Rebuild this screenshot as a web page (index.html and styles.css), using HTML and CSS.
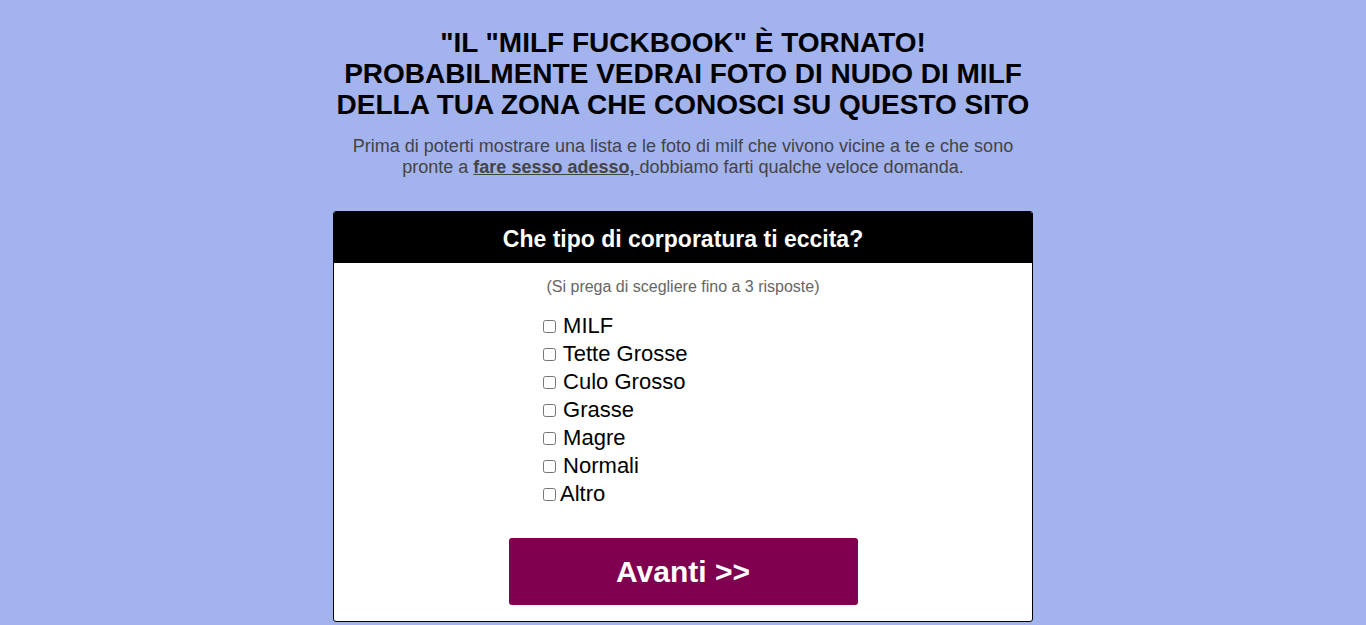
FILE: index.html
```html
<!DOCTYPE html>
<html lang="it">
<head>
<meta charset="utf-8">
<title>Milf Fuckbook</title>
<link rel="stylesheet" href="styles.css">
</head>
<body>
<div class="wrap">
  <h1 class="title">"IL "MILF FUCKBOOK" È TORNATO!<br>PROBABILMENTE VEDRAI FOTO DI NUDO DI MILF DELLA TUA ZONA CHE CONOSCI SU QUESTO SITO</h1>
  <p class="intro">Prima di poterti mostrare una lista e le foto di milf che vivono vicine a te e che sono pronte a <b class="hot">fare sesso adesso, </b>dobbiamo farti qualche veloce domanda.</p>
  <div class="card">
    <div class="card-head">Che tipo di corporatura ti eccita?</div>
    <div class="card-body">
      <p class="hint">(Si prega di scegliere fino a 3 risposte)</p>
      <div class="options">
        <label class="opt"><input type="checkbox"> MILF</label>
        <label class="opt"><input type="checkbox"> Tette Grosse</label>
        <label class="opt"><input type="checkbox"> Culo Grosso</label>
        <label class="opt"><input type="checkbox"> Grasse</label>
        <label class="opt"><input type="checkbox"> Magre</label>
        <label class="opt"><input type="checkbox"> Normali</label>
        <label class="opt tight"><input type="checkbox">Altro</label>
      </div>
      <button class="next" type="button">Avanti &gt;&gt;</button>
    </div>
  </div>
</div>
</body>
</html>
```
FILE: styles.css
```css
html, body {
  margin: 0;
  padding: 0;
  background: #a3b3ee;
  font-family: "Liberation Sans", Arial, sans-serif;
}
.wrap {
  width: 700px;
  margin: 0 auto;
  padding-top: 27px;
}
.title {
  margin: 0;
  text-align: center;
  font-size: 28px;
  line-height: 31px;
  font-weight: bold;
  color: #000;
}
.intro {
  margin: 16px 18px 0;
  text-align: center;
  font-size: 18px;
  line-height: 21px;
  color: #444;
}
.hot {
  color: #444;
  text-decoration: underline;
}
.card {
  margin-top: 33px;
  background: #fff;
  border: 1px solid #000;
  border-radius: 3px;
  overflow: hidden;
}
.card-head {
  background: #000;
  color: #fff;
  text-align: center;
  font-size: 23px;
  font-weight: bold;
  height: 51px;
  line-height: 54px;
}
.card-body {
  padding: 15px 0 16px;
}
.hint {
  margin: 0;
  text-align: center;
  font-size: 16px;
  line-height: 18px;
  color: #666;
}
.options {
  padding-left: 209px;
  margin-top: 16px;
  display: flex;
  flex-direction: column;
}
.opt {
  display: flex;
  align-items: center;
  height: 28px;
  font-size: 22px;
  color: #000;
  white-space: pre;
}
.opt input {
  margin: 0 1px 0 0;
  width: 13px;
  height: 13px;
}
.opt.tight input {
  margin-right: 4px;
}
.next {
  display: block;
  width: 349px;
  height: 67px;
  margin: 30px auto 0;
  background: #800050;
  color: #fff;
  border: none;
  border-radius: 3px;
  font-family: "Liberation Sans", Arial, sans-serif;
  font-size: 30px;
  font-weight: bold;
  cursor: pointer;
}
```
